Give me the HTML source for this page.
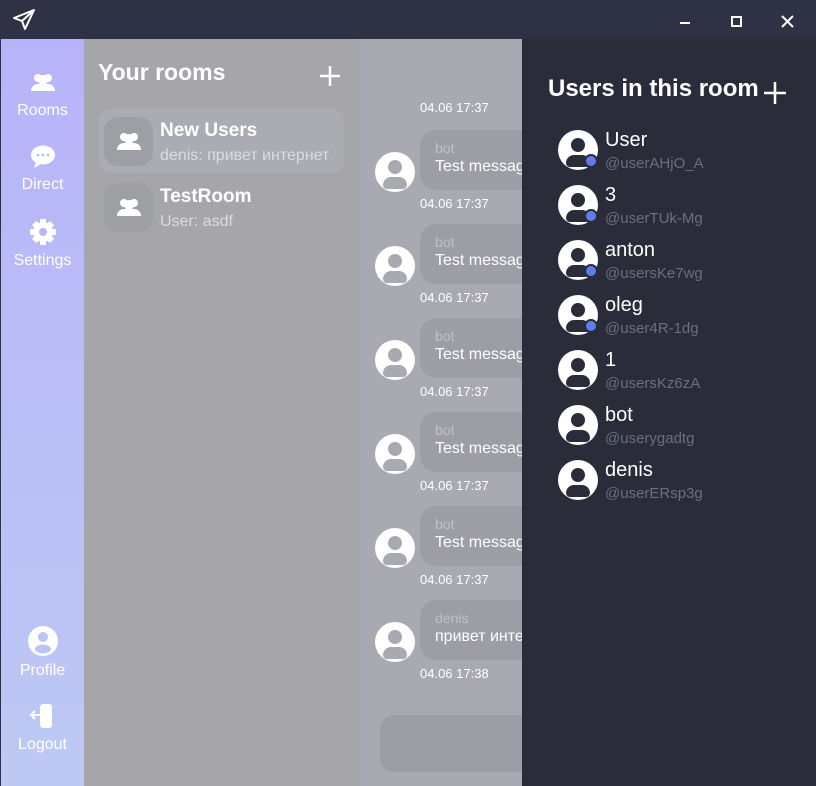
<!DOCTYPE html>
<html><head><meta charset="utf-8"><style>
*{margin:0;padding:0;box-sizing:border-box}
body{width:816px;height:786px;overflow:hidden;font-family:"Segoe UI","Liberation Sans","Noto Sans CJK SC",sans-serif;background:#2f3244;position:relative}
.abs{position:absolute}
.title{left:0;top:0;width:816px;height:39px;background:#2f3244}
.side{left:1px;top:39px;width:83px;height:747px;background:linear-gradient(#b7b3f8,#bdc9f4)}
.nav{position:absolute;width:83px;text-align:center;color:#fff;font-size:16px;font-family:"Liberation Sans",sans-serif}
.rooms{left:84px;top:39px;width:275px;height:747px;background:#a6a6aa}
.chat{left:359px;top:39px;width:163px;height:747px;background:#a9aab1;overflow:hidden}
.right{left:522px;top:39px;width:294px;height:747px;background:#2a2c3a}
.bub{position:absolute;left:61px;width:140px;height:60px;background:#9d9ea5;border-radius:16px;color:#fff;font-size:16px;padding:9px 15px;white-space:nowrap;line-height:20px}
.bub .n{color:#bfc0c5;font-size:14px;line-height:18px}
.ts{position:absolute;left:61px;color:#fff;font-size:13px}
.av{position:absolute;width:40px;height:40px;border-radius:50%;background:#fff;overflow:hidden}
.av i{position:absolute;left:13px;top:8px;width:14px;height:14px;border-radius:50%;background:var(--c)}
.av b{position:absolute;left:8px;top:25px;width:24px;height:12px;border-radius:12px 12px 6px 6px;background:var(--c)}
.u{position:absolute;left:36px}
.u .nm{position:absolute;left:47px;top:-2px;color:#fff;font-size:20px;white-space:nowrap;line-height:24px}
.u .hd{position:absolute;left:47px;top:25px;color:#6b6e80;font-size:15px;white-space:nowrap;line-height:18px}
.dot{position:absolute;left:26px;top:24px;width:14px;height:14px;border-radius:50%;background:#5f7cf0;border:2px solid #2a2c3a}
</style></head><body>
<div class="abs title">
<svg class="abs" style="left:12px;top:9px" width="24" height="22" viewBox="0 0 24 22"><path d="M22 1 L2 9 L10 12 L13 20 Z M10 12 L22 1" fill="none" stroke="#fff" stroke-width="2" stroke-linejoin="round"/></svg>
<div class="abs" style="left:680px;top:22px;width:10px;height:2px;background:#fff"></div>
<div class="abs" style="left:731px;top:16px;width:11px;height:11px;border:2px solid #fff"></div>
<svg class="abs" style="left:781px;top:15px" width="13" height="13"><path d="M1 1L12 12M12 1L1 12" stroke="#fff" stroke-width="2"/></svg>
</div>
<div class="abs side">
<div class="nav" style="top:32px"><svg width="26" height="22" viewBox="0 0 26 22"><circle cx="8" cy="7" r="4" fill="#fff"/><circle cx="18" cy="7" r="4" fill="#fff"/><circle cx="13" cy="9" r="5" fill="#fff"/><path d="M1 20c0-5 4-7 7-7h10c3 0 7 2 7 7z" fill="#fff"/></svg><div style="margin-top:4px">Rooms</div></div>
<div class="nav" style="top:106px"><svg width="26" height="24" viewBox="0 0 26 24"><ellipse cx="13" cy="10" rx="12" ry="9.5" fill="#fff"/><path d="M6 17l-2 6 7-4z" fill="#fff"/><circle cx="8" cy="10" r="1.3" fill="#b8b8f6"/><circle cx="13" cy="10" r="1.3" fill="#b8b8f6"/><circle cx="18" cy="10" r="1.3" fill="#b8b8f6"/></svg><div style="margin-top:2px">Direct</div></div>
<div class="nav" style="top:178px"><svg width="30" height="30" viewBox="0 0 30 30"><g fill="#fff"><circle cx="15" cy="15" r="10"/><g stroke="#fff" stroke-width="6"><path d="M15 2v26M2 15h26M6 6l18 18M24 6L6 24"/></g></g><circle cx="15" cy="15" r="4" fill="#b9b7f7"/></svg><div>Settings</div></div>
<div class="nav" style="top:586px"><svg width="32" height="32" viewBox="0 0 32 32"><circle cx="16" cy="16" r="15" fill="#fff"/><circle cx="16" cy="12" r="5" fill="#bcc4f5"/><ellipse cx="16" cy="24" rx="8" ry="4.5" fill="#bcc4f5"/></svg><div>Profile</div></div>
<div class="nav" style="top:663px"><svg width="30" height="28" viewBox="0 0 30 28"><rect x="12" y="2" width="12" height="24" rx="3" fill="#fff"/><path d="M14 13H3M7 9l-4 4 4 4" stroke="#fff" stroke-width="2" fill="none"/></svg><div style="margin-top:1px">Logout</div></div>
</div>
<div class="abs rooms">
<div class="abs" style="left:14px;top:20px;color:#fff;font-size:23px;font-weight:bold">Your rooms</div>
<svg class="abs" style="left:236px;top:27px" width="20" height="20"><path d="M10 0v20M0 10h20" stroke="#fff" stroke-width="2.5"/></svg>
<div class="abs" style="left:15px;top:70px;width:245px;height:64px;background:#abacb3;border-radius:12px"></div>
<div class="abs" style="left:20px;top:78px;width:49px;height:49px;background:#9e9fa4;border-radius:14px"></div>
<div class="abs" style="left:20px;top:144px;width:49px;height:49px;background:#9e9fa4;border-radius:14px"></div>
<svg class="abs" style="left:31px;top:91px" width="28" height="22" viewBox="0 0 26 22"><circle cx="8" cy="7" r="4" fill="#fff"/><circle cx="18" cy="7" r="4" fill="#fff"/><circle cx="13" cy="9" r="5" fill="#fff"/><path d="M1 20c0-5 4-7 7-7h10c3 0 7 2 7 7z" fill="#fff"/></svg>
<svg class="abs" style="left:31px;top:157px" width="28" height="22" viewBox="0 0 26 22"><circle cx="8" cy="7" r="4" fill="#fff"/><circle cx="18" cy="7" r="4" fill="#fff"/><circle cx="13" cy="9" r="5" fill="#fff"/><path d="M1 20c0-5 4-7 7-7h10c3 0 7 2 7 7z" fill="#fff"/></svg>
<div class="abs" style="left:76px;top:81px;color:#fff;font-size:19px;font-weight:bold">New Users</div>
<div class="abs" style="left:76px;top:108px;color:#dcdce0;font-size:16px">denis: привет интернет</div>
<div class="abs" style="left:76px;top:147px;color:#fff;font-size:19px;font-weight:bold">TestRoom</div>
<div class="abs" style="left:76px;top:174px;color:#dcdce0;font-size:16px">User: asdf</div>
</div>
<div class="abs chat">
<div class="ts" style="top:61px">04.06 17:37</div>
<div class="bub" style="top:91px"><div class="n">bot</div>Test message</div><div class="av" style="left:16px;top:113px;--c:#a9aab1"><i></i><b></b></div><div class="ts" style="top:157px">04.06 17:37</div>
<div class="bub" style="top:185px"><div class="n">bot</div>Test message</div><div class="av" style="left:16px;top:207px;--c:#a9aab1"><i></i><b></b></div><div class="ts" style="top:251px">04.06 17:37</div>
<div class="bub" style="top:279px"><div class="n">bot</div>Test message</div><div class="av" style="left:16px;top:301px;--c:#a9aab1"><i></i><b></b></div><div class="ts" style="top:345px">04.06 17:37</div>
<div class="bub" style="top:373px"><div class="n">bot</div>Test message</div><div class="av" style="left:16px;top:395px;--c:#a9aab1"><i></i><b></b></div><div class="ts" style="top:439px">04.06 17:37</div>
<div class="bub" style="top:467px"><div class="n">bot</div>Test message</div><div class="av" style="left:16px;top:489px;--c:#a9aab1"><i></i><b></b></div><div class="ts" style="top:533px">04.06 17:37</div>
<div class="bub" style="top:561px"><div class="n">denis</div>привет интернет</div><div class="av" style="left:16px;top:583px;--c:#a9aab1"><i></i><b></b></div><div class="ts" style="top:627px">04.06 17:38</div>
<div class="abs" style="left:21px;top:676px;width:180px;height:57px;background:#9d9ea5;border-radius:14px"></div>
</div>
<div class="abs right">
<div class="abs" style="left:26px;top:36px;color:#fff;font-size:24px;font-weight:bold;white-space:nowrap">Users in this room</div>
<svg class="abs" style="left:242px;top:43px" width="22" height="22"><path d="M11 0v22M0 11h22" stroke="#fff" stroke-width="2.5"/></svg>
<div class="u" style="top:91px"><div class="av" style="--c:#2a2c3a"><i></i><b></b></div><div class="dot"></div><div class="nm">User</div><div class="hd">@userAHjO_A</div></div>
<div class="u" style="top:146px"><div class="av" style="--c:#2a2c3a"><i></i><b></b></div><div class="dot"></div><div class="nm">3</div><div class="hd">@userTUk-Mg</div></div>
<div class="u" style="top:201px"><div class="av" style="--c:#2a2c3a"><i></i><b></b></div><div class="dot"></div><div class="nm">anton</div><div class="hd">@usersKe7wg</div></div>
<div class="u" style="top:256px"><div class="av" style="--c:#2a2c3a"><i></i><b></b></div><div class="dot"></div><div class="nm">oleg</div><div class="hd">@user4R-1dg</div></div>
<div class="u" style="top:311px"><div class="av" style="--c:#2a2c3a"><i></i><b></b></div><div class="nm">1</div><div class="hd">@usersKz6zA</div></div>
<div class="u" style="top:366px"><div class="av" style="--c:#2a2c3a"><i></i><b></b></div><div class="nm">bot</div><div class="hd">@userygadtg</div></div>
<div class="u" style="top:421px"><div class="av" style="--c:#2a2c3a"><i></i><b></b></div><div class="nm">denis</div><div class="hd">@userERsp3g</div></div>
</div>
</body></html>
